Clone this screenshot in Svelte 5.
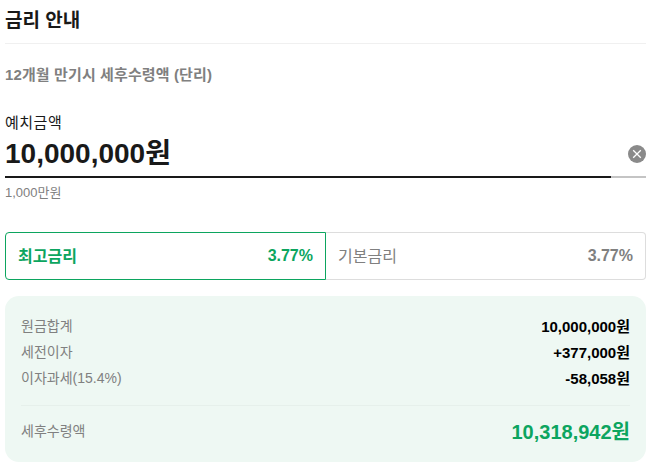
<script>
  const rows = [
    { label: '원금합계', value: '10,000,000원' },
    { label: '세전이자', value: '+377,000원' },
    { label: '이자과세(15.4%)', value: '-58,058원' }
  ];
</script>

<main>
  <h2>금리 안내</h2>
  <h3>12개월 만기시 세후수령액 (단리)</h3>

  <section class="amount">
    <div class="label">예치금액</div>
    <div class="input-row">
      <span class="value">10,000,000원</span>
      <button class="clear" aria-label="지우기">
        <svg viewBox="0 0 18 18" width="18" height="18">
          <circle cx="9" cy="9" r="9" fill="#8a8a8a" />
          <path d="M5.2 5.2l7.6 7.6M12.8 5.2l-7.6 7.6" stroke="#fff" stroke-width="1.3" />
        </svg>
      </button>
    </div>
    <div class="track"><div class="fill"></div></div>
    <div class="hint">1,000만원</div>
  </section>

  <div class="tabs">
    <div class="tab active"><span>최고금리</span><b>3.77%</b></div>
    <div class="tab"><span>기본금리</span><b>3.77%</b></div>
  </div>

  <section class="summary">
    {#each rows as row}
      <div class="row">
        <span>{row.label}</span>
        <strong>{row.value}</strong>
      </div>
    {/each}
    <div class="total">
      <span>세후수령액</span>
      <strong>10,318,942원</strong>
    </div>
  </section>
</main>

<style>
  :global(body) {
    background: #fff;
  }

  main {
    padding: 0 7px 0 5px;
    font-family: "Liberation Sans", "Noto Sans CJK KR", sans-serif;
    color: #191919;
  }

  h2 {
    margin: 0;
    height: 44px;
    box-sizing: border-box;
    padding-top: 9px;
    font-size: 19px;
    line-height: 24px;
    font-weight: 700;
    border-bottom: 1px solid #f0f0f0;
  }

  h3 {
    margin: 22px 0 0;
    font-size: 15px;
    line-height: 18px;
    font-weight: 700;
    letter-spacing: 0.12px;
    color: #808080;
  }

  .amount {
    margin-top: 30px;
  }

  .label {
    font-size: 15px;
    line-height: 18px;
    letter-spacing: 0.5px;
    color: #191919;
  }

  .input-row {
    display: flex;
    align-items: center;
    justify-content: space-between;
    height: 35px;
    margin-top: 4px;
  }

  .value {
    font-size: 28px;
    line-height: 35px;
    font-weight: 700;
  }

  .clear {
    display: block;
    width: 18px;
    height: 18px;
    padding: 0;
    border: 0;
    background: none;
  }

  .clear svg {
    display: block;
  }

  .track {
    height: 2px;
    margin-top: 5px;
    background: #c4c4c4;
  }

  .fill {
    width: 606px;
    height: 2px;
    background: #191919;
  }

  .hint {
    margin-top: 6px;
    font-size: 13px;
    line-height: 18px;
    color: #808080;
  }

  .tabs {
    display: flex;
    margin-top: 30px;
  }

  .tab {
    flex: 1;
    display: flex;
    align-items: center;
    justify-content: space-between;
    box-sizing: border-box;
    height: 48px;
    padding: 0 12px;
    font-size: 16px;
    color: #808080;
    border: 1px solid #ddd;
    border-left: 0;
    border-radius: 0 4px 4px 0;
  }

  .tab span {
    margin-bottom: 2px;
  }

  .tab b {
    font-size: 16px;
  }

  .tab.active {
    color: #0ca55f;
    font-weight: 700;
    border: 1px solid #0ca55f;
    border-radius: 4px 0 0 4px;
  }

  .summary {
    margin-top: 16px;
    height: 166px;
    box-sizing: border-box;
    padding: 16px 16px 0;
    background: #eef8f3;
    border-radius: 14px;
  }

  .row {
    display: flex;
    justify-content: space-between;
    align-items: center;
    height: 26px;
    font-size: 14px;
    color: #808080;
  }

  .row strong {
    font-size: 15px;
    color: #000;
  }

  .total {
    display: flex;
    justify-content: space-between;
    align-items: center;
    height: 48px;
    margin-top: 15px;
    border-top: 1px solid #e6f0eb;
    font-size: 14px;
    color: #808080;
  }

  .total strong {
    font-size: 20px;
    color: #0ca55f;
  }
</style>
